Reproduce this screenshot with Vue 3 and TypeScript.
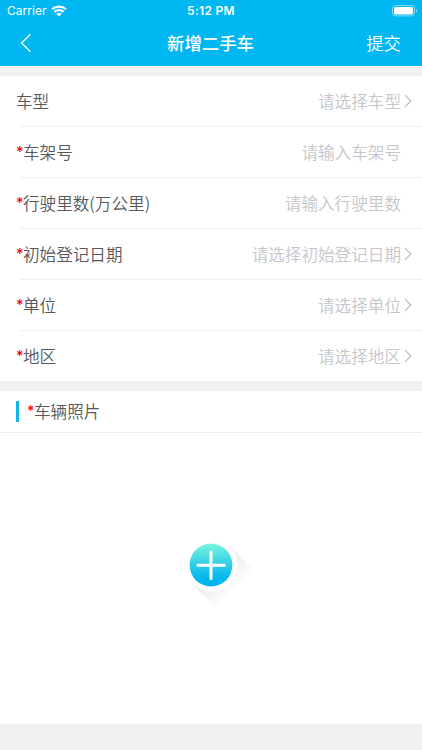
<script setup lang="ts">
interface Field {
  label: string
  placeholder: string
  required: boolean
  picker: boolean
}

const fields: Field[] = [
  { label: '车型', placeholder: '请选择车型', required: false, picker: true },
  { label: '车架号', placeholder: '请输入车架号', required: true, picker: false },
  { label: '行驶里数(万公里)', placeholder: '请输入行驶里数', required: true, picker: false },
  { label: '初始登记日期', placeholder: '请选择初始登记日期', required: true, picker: true },
  { label: '单位', placeholder: '请选择单位', required: true, picker: true },
  { label: '地区', placeholder: '请选择地区', required: true, picker: true },
]
</script>

<template>
  <div class="screen">
    <header class="header">
      <div class="status">
        <div class="carrier">
          <span>Carrier</span>
          <svg class="wifi" width="16" height="12" viewBox="0 0 16 12">
            <path d="M1.1 4.3a10 10 0 0 1 13.8 0M3.5 6.9a6.6 6.6 0 0 1 9 0" fill="none" stroke="#fff" stroke-width="2.2" />
            <path d="M5.4 9a3.8 3.8 0 0 1 5.2 0L8 11.6z" fill="#fff" />
          </svg>
        </div>
        <span class="time">5:12 PM</span>
        <svg class="battery" width="26" height="12" viewBox="0 0 26 12">
          <rect x=".5" y=".5" width="22" height="10.4" rx="3" fill="none" stroke="#fff" stroke-opacity=".5" />
          <rect x="2" y="2" width="19" height="7.4" rx="1.6" fill="#fff" />
          <path d="M24 4v3.6q1.2-.5 1.2-1.8T24 4z" fill="#fff" fill-opacity=".55" />
        </svg>
      </div>
      <div class="nav">
        <svg class="back" width="12" height="20" viewBox="0 0 12 20">
          <path d="M10.5 1.2 1.5 10l9 8.8" fill="none" stroke="#fff" stroke-width="1.3" />
        </svg>
        <h1 class="title">新增二手车</h1>
        <span class="submit">提交</span>
      </div>
    </header>

    <main>
      <section class="form">
        <div v-for="field in fields" :key="field.label" class="row">
          <div class="label"><span v-if="field.required" class="star">*</span>{{ field.label }}</div>
          <div class="value">{{ field.placeholder }}</div>
          <svg v-if="field.picker" class="chevron" width="8" height="14" viewBox="0 0 8 14">
            <path d="M1 1.2 6.8 7 1 12.8" fill="none" stroke="#bcbcc0" stroke-width="1.2" />
          </svg>
        </div>
      </section>

      <section class="photos">
        <div class="heading">
          <i class="bar"></i>
          <div class="label"><span class="star">*</span>车辆照片</div>
        </div>
        <div class="upload">
          <svg width="86" height="86" viewBox="0 0 86 86">
            <defs>
              <linearGradient id="disc" x1="0" y1="0" x2="0" y2="1">
                <stop offset="0" stop-color="#7af5dc" />
                <stop offset=".5" stop-color="#2fcdea" />
                <stop offset=".8" stop-color="#02b7ef" />
                <stop offset="1" stop-color="#00b4ee" />
              </linearGradient>
              <linearGradient id="shade" gradientUnits="userSpaceOnUse" x1="43" y1="43" x2="68" y2="68">
                <stop offset="0" stop-color="#000" stop-opacity=".09" />
                <stop offset=".6" stop-color="#000" stop-opacity=".045" />
                <stop offset="1" stop-color="#000" stop-opacity="0" />
              </linearGradient>
            </defs>
            <path d="M62 24 92 54 54 92 24 62z" fill="url(#shade)" />
            <circle cx="43" cy="43" r="26.5" fill="#fff" />
            <circle cx="43" cy="43" r="21.4" fill="url(#disc)" />
            <path d="M43 30v26.6M29.8 43.3h26.6" fill="none" stroke="#fff" stroke-width="3" stroke-linecap="round" />
          </svg>
        </div>
      </section>
    </main>
  </div>
</template>

<style>
body {
  background: #f1f1f1;
}
</style>

<style scoped>
.screen {
  box-sizing: border-box;
  width: 422px;
  height: 750px;
  overflow: hidden;
  background: #f1f1f1;
  color: #585858;
  font-family: "Noto Sans CJK SC", sans-serif;
  font-weight: 350;
  font-size: 16.6px;
}
.header {
  height: 65.5px;
  background: #00b7f1;
  color: #fff;
}
.status {
  display: grid;
  grid-template-columns: 1fr auto 1fr;
  align-items: center;
  height: 22px;
  padding: 0 7px;
  font: 12px/22px Inter, sans-serif;
}
.carrier {
  display: flex;
  align-items: center;
  gap: 4px;
  letter-spacing: 0.05px;
}
.time {
  font-weight: 600;
  letter-spacing: 0.3px;
}
.battery {
  justify-self: end;
  margin-right: -3px;
}
.nav {
  display: grid;
  grid-template-columns: 1fr auto 1fr;
  align-items: center;
  height: 42px;
  padding: 0 21px 0 20px;
}
.title {
  margin: 0;
  font-size: 17.4px;
  font-weight: 500;
  line-height: 40px;
}
.submit {
  justify-self: end;
  font-size: 17.4px;
  line-height: 40px;
}
.form {
  margin-top: 10.5px;
  background: #fff;
}
.row {
  display: flex;
  align-items: center;
  box-sizing: border-box;
  height: 51px;
  padding: 0 10px 1px 16px;
  background: linear-gradient(#f0f0f0, #f0f0f0) 20px 100% / 100% 1px no-repeat;
}
.row:last-child {
  height: 50px;
  padding-bottom: 0;
  background: none;
}
.label {
  display: flex;
  line-height: 24px;
  white-space: nowrap;
}
.star {
  width: 7px;
  color: #f80000;
  font-family: Inter, sans-serif;
  font-size: 14.5px;
  font-weight: 500;
}
.value {
  flex: 1;
  margin-right: 11px;
  color: #c6c6ca;
  line-height: 24px;
  text-align: right;
}
.value:has(+ .chevron) {
  margin-right: 3px;
}
.photos {
  display: flex;
  flex-direction: column;
  height: 333px;
  margin-top: 10px;
  background: #fff;
}
.heading {
  display: flex;
  align-items: center;
  gap: 8px;
  box-sizing: border-box;
  height: 41.5px;
  padding-left: 16px;
  border-bottom: 1px solid #ededed;
}
.bar {
  width: 3px;
  height: 21px;
  background: #13b4e6;
}
.upload {
  display: flex;
  flex: 1;
  align-items: center;
  justify-content: center;
  padding-bottom: 27px;
}
</style>
